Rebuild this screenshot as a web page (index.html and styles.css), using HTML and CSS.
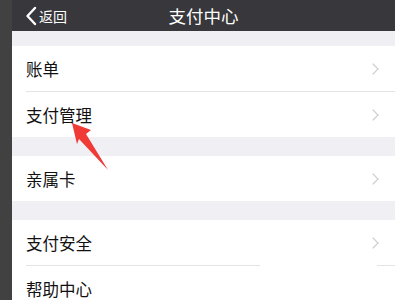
FILE: index.html
```html
<!DOCTYPE html>
<html>
<head>
<meta charset="utf-8">
<link rel="stylesheet" href="styles.css">
</head>
<body>
<div class="screen">
  <div class="strip"></div>
  <div class="main">
    <header class="nav">
      <div class="back">
        <svg class="back-icon" width="12" height="20" viewBox="0 0 12 20"><path d="M10 2 L2.5 10 L10 18" fill="none" stroke="#fff" stroke-width="2.4" stroke-linecap="round" stroke-linejoin="round"/></svg>
        <span>返回</span>
      </div>
      <div class="title">支付中心</div>
    </header>
    <div class="gap first"></div>
    <div class="group">
      <div class="row"><span class="label">账单</span><span class="chev"></span></div>
      <div class="row"><span class="label">支付管理</span><span class="chev"></span></div>
    </div>
    <div class="gap"></div>
    <div class="group">
      <div class="row"><span class="label">亲属卡</span><span class="chev"></span></div>
    </div>
    <div class="gap"></div>
    <div class="group">
      <div class="row"><span class="label">支付安全</span><span class="chev"></span></div>
      <div class="row"><span class="label">帮助中心</span></div>
    </div>
    <div class="patch"></div>
  </div>
  <svg class="arrow" width="395" height="300" viewBox="0 0 395 300"><polygon points="72,123 91,130 86,134 108,170 79,139 77,144" fill="#f03a36"/></svg>
</div>
</body>
</html>
```
FILE: styles.css
```css
html, body {
  margin: 0;
  padding: 0;
  width: 395px;
  height: 300px;
  overflow: hidden;
  background: #fff;
  font-family: "Noto Sans CJK SC", "Noto Sans", sans-serif;
}
.screen {
  position: relative;
  display: flex;
  width: 395px;
  height: 300px;
}
.strip {
  width: 12px;
  flex: none;
  background: #414141;
}
.main {
  position: relative;
  flex: 1;
  display: flex;
  flex-direction: column;
  background: #efeff4;
}
.nav {
  position: relative;
  height: 31px;
  flex: none;
  background: #38373c;
  display: flex;
  align-items: center;
  color: #fff;
}
.back {
  display: flex;
  align-items: center;
  padding-left: 13px;
  font-size: 14px;
  gap: 2px;
}
.title {
  position: absolute;
  left: 0;
  right: 0;
  text-align: center;
  font-size: 17.5px;
  pointer-events: none;
}
.gap {
  height: 19px;
  flex: none;
}
.gap.first {
  height: 15px;
}
.group {
  background: #fff;
  padding-left: 14px;
}
.row {
  height: 45px;
  display: flex;
  align-items: center;
  justify-content: space-between;
  border-bottom: 1px solid #e4e4e8;
  padding-right: 16px;
}
.row:last-child {
  border-bottom: none;
}
.group:last-of-type .row:last-child {
  height: 60px;
}
.label {
  font-size: 16.5px;
  color: #111;
}
.chev {
  width: 7px;
  height: 7px;
  border-right: 1.5px solid #c7c7cc;
  border-top: 1.5px solid #c7c7cc;
  transform: rotate(45deg);
  margin-right: 2px;
}
.patch {
  position: absolute;
  left: 248px;
  top: 263px;
  width: 117px;
  height: 3px;
  background: #fff;
}
.arrow {
  position: absolute;
  left: 0;
  top: 0;
  pointer-events: none;
}
```
